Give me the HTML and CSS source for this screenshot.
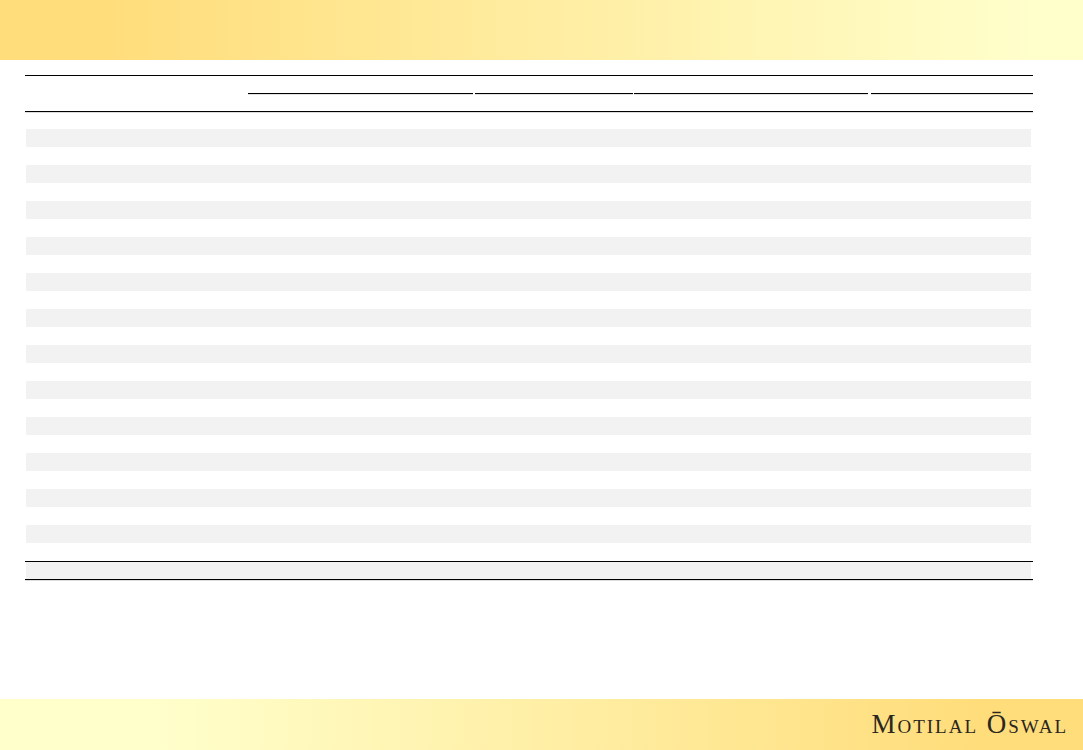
FILE: index.html
```html
<!DOCTYPE html>
<html lang="en">
<head>
<meta charset="utf-8">
<title>Motilal Oswal</title>
<link rel="stylesheet" href="styles.css">
</head>
<body>
<div class="slide">
  <header class="top-band"></header>
  <main class="content">
    <div class="table">
      <div class="thead">
        <div class="group-row">
          <span class="group g1"></span>
          <span class="group g2"></span>
          <span class="group g3"></span>
          <span class="group g4"></span>
        </div>
      </div>
      <div class="tbody">
        <div class="row first"></div><div class="row shaded"></div>
        <div class="row"></div><div class="row shaded"></div>
        <div class="row"></div><div class="row shaded"></div>
        <div class="row"></div><div class="row shaded"></div>
        <div class="row"></div><div class="row shaded"></div>
        <div class="row"></div><div class="row shaded"></div>
        <div class="row"></div><div class="row shaded"></div>
        <div class="row"></div><div class="row shaded"></div>
        <div class="row"></div><div class="row shaded"></div>
        <div class="row"></div><div class="row shaded"></div>
        <div class="row"></div><div class="row shaded"></div>
        <div class="row"></div><div class="row shaded"></div>
        <div class="row"></div>
      </div>
      <div class="total"><div class="total-fill"></div></div>
    </div>
  </main>
  <footer class="bottom-band">
    <span class="logo">Motilal Ōswal</span>
  </footer>
</div>
</body>
</html>
```
FILE: styles.css
```css
html, body {
  margin: 0;
  padding: 0;
  background: #ffffff;
}

.slide {
  width: 1083px;
  height: 750px;
  display: flex;
  flex-direction: column;
  overflow: hidden;
}

.top-band {
  height: 60px;
  flex: none;
  background: linear-gradient(90deg, #ffdd7b 10%, #ffffcc 96%);
}

.content {
  flex: 1;
  padding: 15px 50px 0 25px;
}

.table {
  width: 1008px;
}

.thead {
  height: 35px;
  border-top: 1px solid #000;
  border-bottom: 1px solid #000;
  box-shadow: 0 1px 0 #dcdcdc;
}

.group-row {
  display: flex;
  height: 18px;
  padding-left: 223px;
}

.group {
  display: block;
  height: 17px;
  border-bottom: 1px solid #000;
  box-shadow: 0 1px 0 #e2e2e2;
}

.g1 { width: 225px; margin-right: 2px; }
.g2 { width: 158px; margin-right: 1px; }
.g3 { width: 234px; margin-right: 3px; }
.g4 { width: 162px; }

.tbody {
  padding: 0 2px 0 1px;
}

.row {
  height: 18px;
}

.first {
  height: 17px;
}

.shaded {
  background: #f2f2f2;
}

.total {
  height: 17px;
  border-top: 1px solid #000;
  border-bottom: 1px solid #000;
  box-shadow: 0 1px 0 #dcdcdc;
  padding: 0 2px 0 1px;
}

.total-fill {
  height: 100%;
  background: #f2f2f2;
}

.bottom-band {
  height: 51px;
  flex: none;
  display: flex;
  justify-content: flex-end;
  align-items: center;
  padding-right: 15px;
  background: linear-gradient(90deg, #ffffcc 14%, #ffdd7b 90%);
}

.logo {
  font-family: "Liberation Serif", serif;
  font-variant: small-caps;
  font-size: 27px;
  line-height: 30px;
  letter-spacing: 2px;
  color: #2a2620;
  white-space: nowrap;
  position: relative;
  top: -1px;
}
```
